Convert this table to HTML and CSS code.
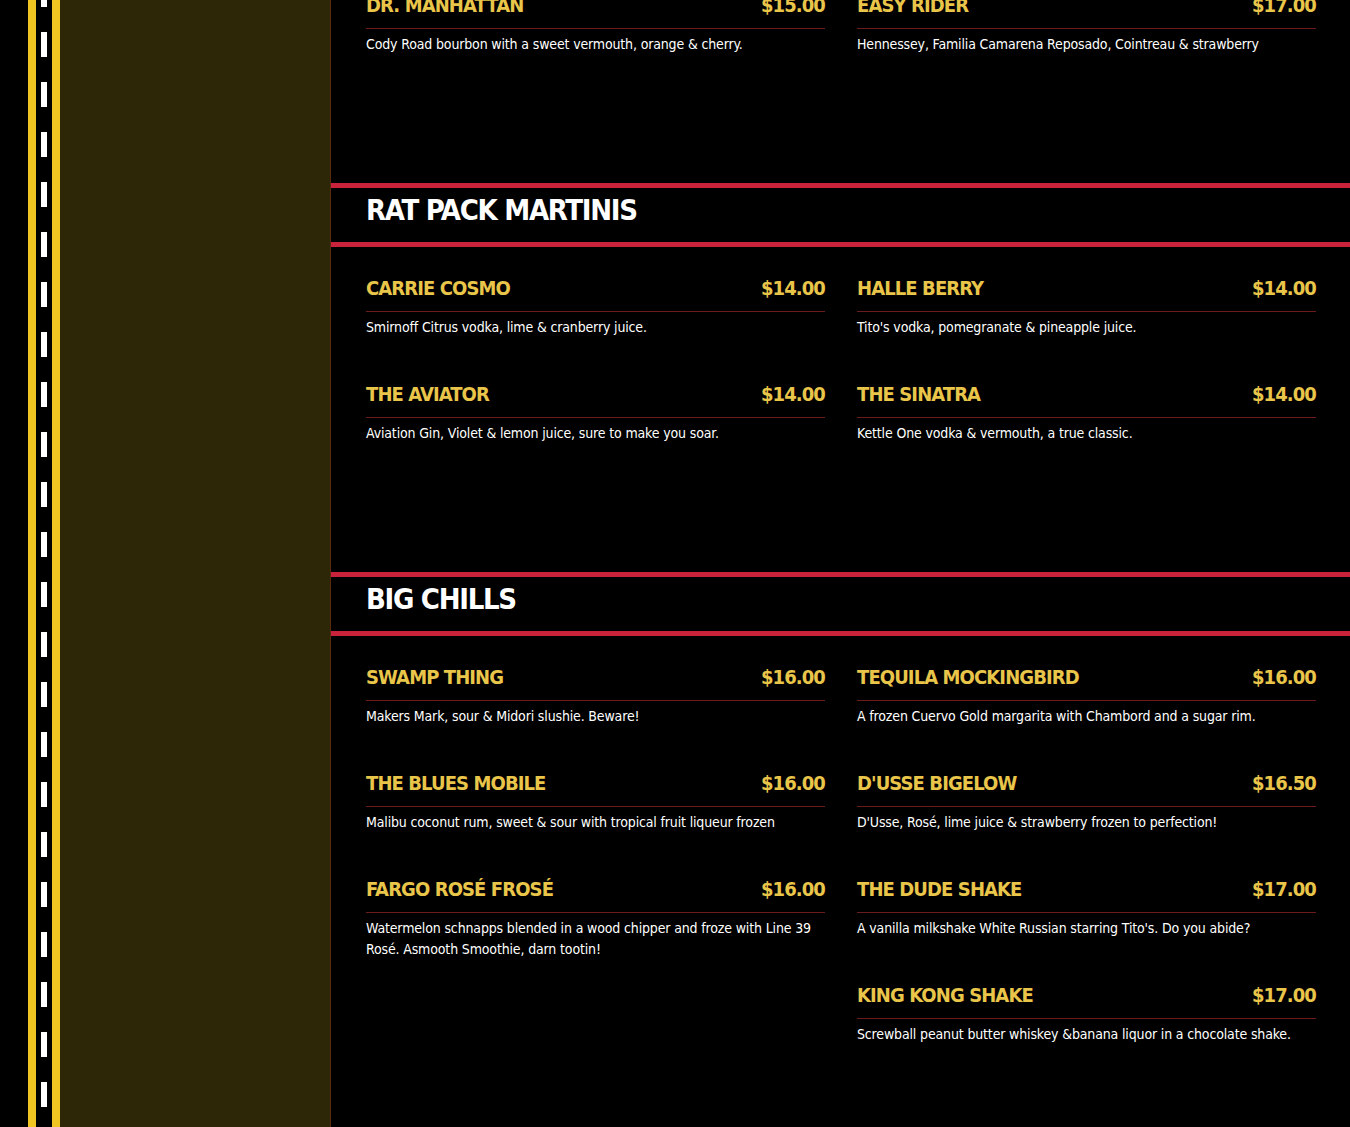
FILE: index.html
```html
<!DOCTYPE html>
<html lang="en">
<head>
<meta charset="utf-8">
<title>Menu</title>
<link rel="stylesheet" href="styles.css">
</head>
<body>
<div class="page">
  <div class="road"><div class="lane"></div></div>
  <aside class="sidebar"></aside>
  <main class="main">
    <section class="section section-cut">
      <div class="items">
        <div class="col">
          <div class="item">
            <div class="item-head"><span class="name">Dr. Manhattan</span><span class="price">$15.00</span></div>
            <p class="desc">Cody Road bourbon with a sweet vermouth, orange &amp; cherry.</p>
          </div>
        </div>
        <div class="col">
          <div class="item">
            <div class="item-head"><span class="name">Easy Rider</span><span class="price">$17.00</span></div>
            <p class="desc">Hennessey, Familia Camarena Reposado, Cointreau &amp; strawberry</p>
          </div>
        </div>
      </div>
    </section>

    <section class="section">
      <h2 class="section-title">Rat Pack Martinis</h2>
      <div class="items">
        <div class="col">
          <div class="item">
            <div class="item-head"><span class="name">Carrie Cosmo</span><span class="price">$14.00</span></div>
            <p class="desc">Smirnoff Citrus vodka, lime &amp; cranberry juice.</p>
          </div>
          <div class="item">
            <div class="item-head"><span class="name">The Aviator</span><span class="price">$14.00</span></div>
            <p class="desc">Aviation Gin, Violet &amp; lemon juice, sure to make you soar.</p>
          </div>
        </div>
        <div class="col">
          <div class="item">
            <div class="item-head"><span class="name">Halle Berry</span><span class="price">$14.00</span></div>
            <p class="desc">Tito's vodka, pomegranate &amp; pineapple juice.</p>
          </div>
          <div class="item">
            <div class="item-head"><span class="name">The Sinatra</span><span class="price">$14.00</span></div>
            <p class="desc">Kettle One vodka &amp; vermouth, a true classic.</p>
          </div>
        </div>
      </div>
    </section>

    <section class="section">
      <h2 class="section-title">Big Chills</h2>
      <div class="items">
        <div class="col">
          <div class="item">
            <div class="item-head"><span class="name">Swamp Thing</span><span class="price">$16.00</span></div>
            <p class="desc">Makers Mark, sour &amp; Midori slushie. Beware!</p>
          </div>
          <div class="item">
            <div class="item-head"><span class="name">The Blues Mobile</span><span class="price">$16.00</span></div>
            <p class="desc">Malibu coconut rum, sweet &amp; sour with tropical fruit liqueur frozen</p>
          </div>
          <div class="item">
            <div class="item-head"><span class="name">Fargo Rosé Frosé</span><span class="price">$16.00</span></div>
            <p class="desc">Watermelon schnapps blended in a wood chipper and froze with Line 39 Rosé. Asmooth Smoothie, darn tootin!</p>
          </div>
        </div>
        <div class="col">
          <div class="item">
            <div class="item-head"><span class="name">Tequila Mockingbird</span><span class="price">$16.00</span></div>
            <p class="desc">A frozen Cuervo Gold margarita with Chambord and a sugar rim.</p>
          </div>
          <div class="item">
            <div class="item-head"><span class="name">D'usse Bigelow</span><span class="price">$16.50</span></div>
            <p class="desc">D'Usse, Rosé, lime juice &amp; strawberry frozen to perfection!</p>
          </div>
          <div class="item">
            <div class="item-head"><span class="name">The Dude Shake</span><span class="price">$17.00</span></div>
            <p class="desc">A vanilla milkshake White Russian starring Tito's. Do you abide?</p>
          </div>
          <div class="item">
            <div class="item-head"><span class="name">King Kong Shake</span><span class="price">$17.00</span></div>
            <p class="desc">Screwball peanut butter whiskey &amp;banana liquor in a chocolate shake.</p>
          </div>
        </div>
      </div>
    </section>
  </main>
</div>
</body>
</html>
```

FILE: styles.css
```css
* { box-sizing: border-box; }

html, body {
  margin: 0;
  padding: 0;
  background: #000;
  height: 100%;
  overflow: hidden;
}

body {
  font-family: "DejaVu Sans Condensed", "DejaVu Sans", sans-serif;
  color: #fff;
}

.page {
  display: flex;
  height: 1127px;
  overflow: hidden;
}

.road {
  flex: 0 0 60px;
  padding-left: 28px;
  background: #000;
}

.lane {
  height: 100%;
  border-left: 8px solid #f1c521;
  border-right: 8px solid #f1c521;
  background-color: #000;
  background-image: linear-gradient(#fff 0 25px, transparent 25px 50px);
  background-size: 6px 50px;
  background-position: 5px 32px;
  background-repeat: repeat-y;
}

.sidebar {
  flex: 0 0 271px;
  background: #2d2707;
  border-right: 1px solid #5a2a10;
}

.main {
  flex: 1;
  min-width: 0;
  background: #000;
}

.section {
  padding-bottom: 86px;
}

.section-cut {
  margin-top: -9px;
}

.section-title {
  margin: 0;
  border-top: 5px solid #c9233b;
  border-bottom: 5px solid #c9233b;
  padding: 2px 35px 12px;
  font-size: 29px;
  line-height: 40px;
  letter-spacing: -1.3px;
  font-weight: 700;
  text-transform: uppercase;
  color: #fff;
}

.items {
  display: grid;
  grid-template-columns: 1fr 1fr;
  column-gap: 32px;
  padding: 27px 34px 0 35px;
  align-items: start;
}

.section-cut .items {
  padding-top: 0;
}

.item {
  margin-bottom: 42px;
}

.item-head {
  display: flex;
  justify-content: space-between;
  align-items: baseline;
  height: 38px;
  padding-bottom: 9px;
  border-bottom: 1px solid #6a1c1c;
  font-size: 20px;
  line-height: 28px;
  letter-spacing: -0.9px;
  font-weight: 700;
  text-transform: uppercase;
  color: #e9c54a;
}

.desc {
  margin: 5px 0 0;
  font-size: 14px;
  line-height: 21px;
  letter-spacing: -0.15px;
  color: #fff;
}
```
